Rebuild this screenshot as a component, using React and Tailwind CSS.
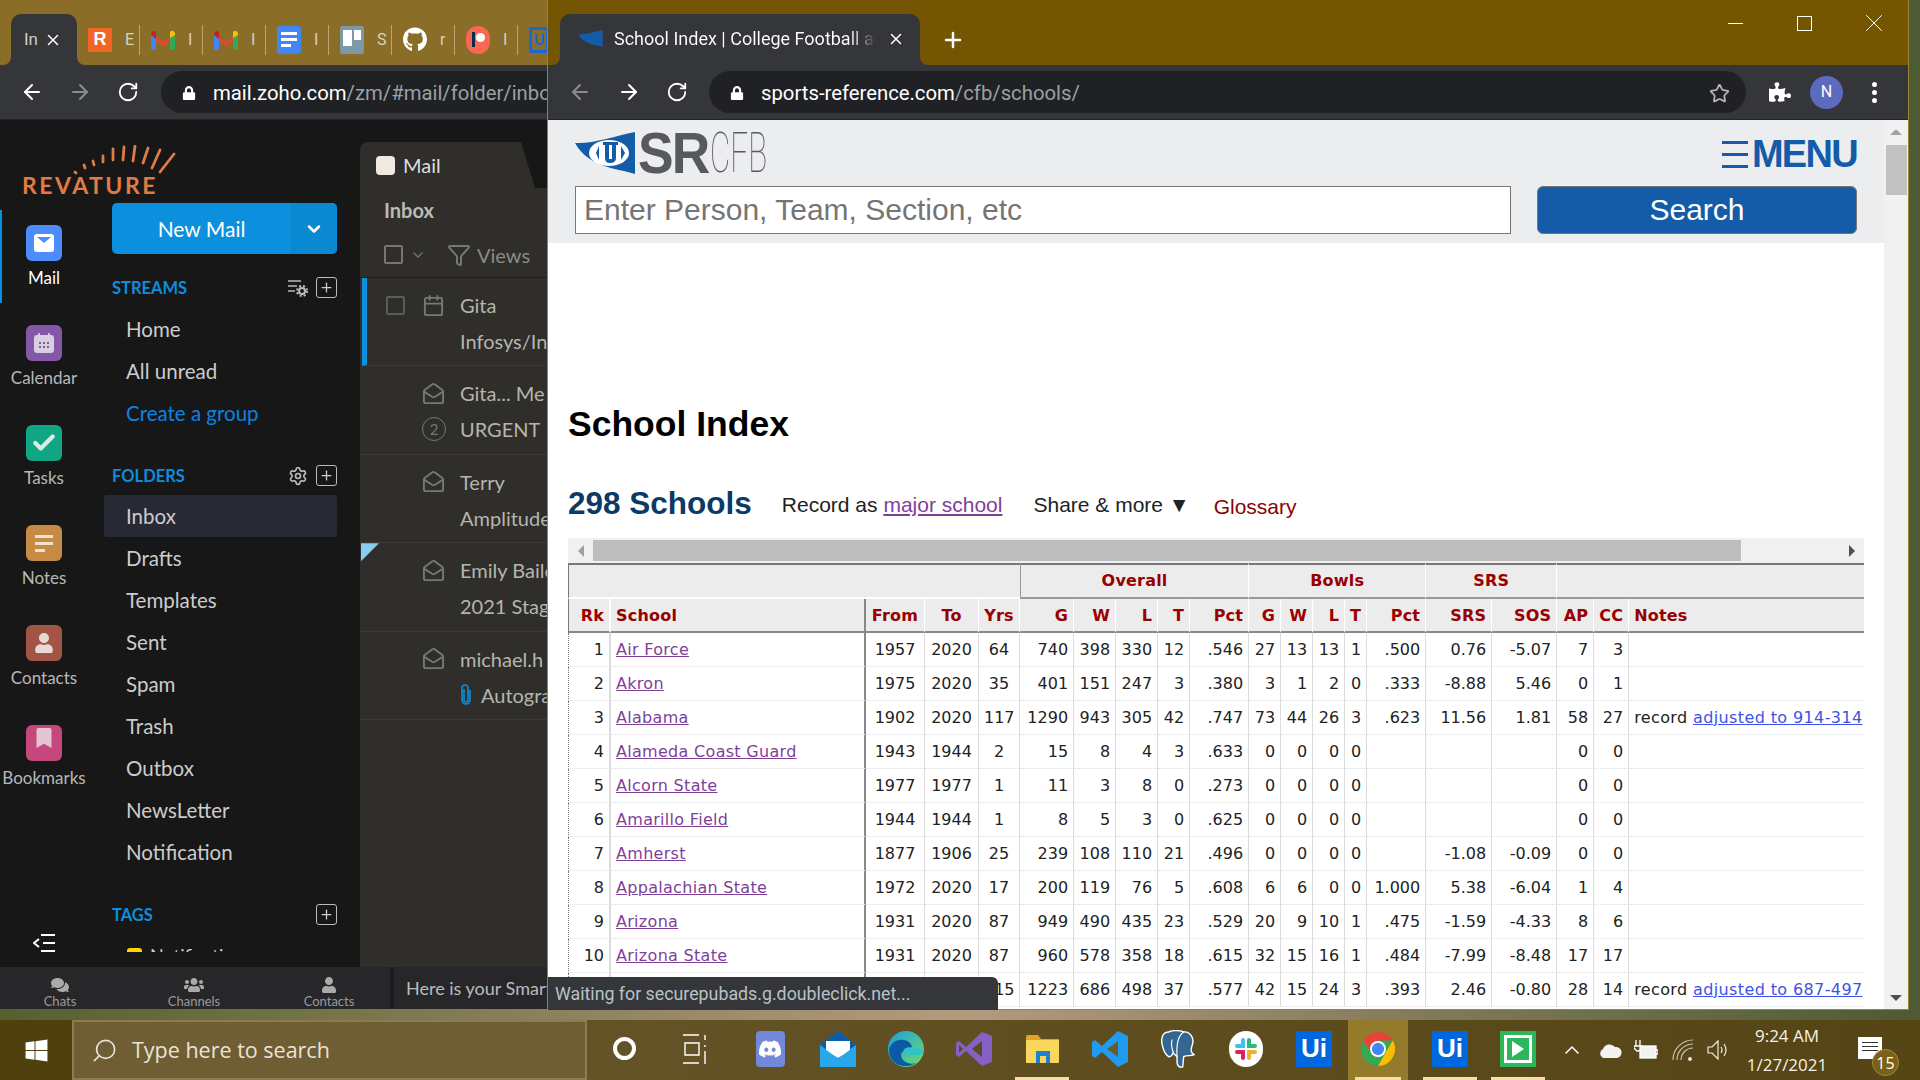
import React from "react";
import { ArrowLeft, ArrowRight, RotateCw, Star, X, Plus, Check, ChevronDown, ChevronUp, Funnel, Settings, MailOpen, Calendar, Search } from "lucide-react";
import { FaGithub, FaDiscord, FaWindows, FaLock, FaPuzzlePiece, FaComments, FaUsers, FaUser, FaBookmark } from "react-icons/fa";

const streams = ["Home", "All unread"];
const folders = ["Inbox", "Drafts", "Templates", "Sent", "Spam", "Trash", "Outbox", "NewsLetter", "Notification"];

const schools = [
  [1, "Air Force", 1957, 2020, 64, 740, 398, 330, 12, ".546", 27, 13, 13, 1, ".500", "0.76", "-5.07", 7, 3],
  [2, "Akron", 1975, 2020, 35, 401, 151, 247, 3, ".380", 3, 1, 2, 0, ".333", "-8.88", "5.46", 0, 1],
  [3, "Alabama", 1902, 2020, 117, 1290, 943, 305, 42, ".747", 73, 44, 26, 3, ".623", "11.56", "1.81", 58, 27, "adjusted to 914-314"],
  [4, "Alameda Coast Guard", 1943, 1944, 2, 15, 8, 4, 3, ".633", 0, 0, 0, 0, "", "", "", 0, 0],
  [5, "Alcorn State", 1977, 1977, 1, 11, 3, 8, 0, ".273", 0, 0, 0, 0, "", "", "", 0, 0],
  [6, "Amarillo Field", 1944, 1944, 1, 8, 5, 3, 0, ".625", 0, 0, 0, 0, "", "", "", 0, 0],
  [7, "Amherst", 1877, 1906, 25, 239, 108, 110, 21, ".496", 0, 0, 0, 0, "", "-1.08", "-0.09", 0, 0],
  [8, "Appalachian State", 1972, 2020, 17, 200, 119, 76, 5, ".608", 6, 6, 0, 0, "1.000", "5.38", "-6.04", 1, 4],
  [9, "Arizona", 1931, 2020, 87, 949, 490, 435, 23, ".529", 20, 9, 10, 1, ".475", "-1.59", "-4.33", 8, 6],
  [10, "Arizona State", 1931, 2020, 87, 960, 578, 358, 18, ".615", 32, 15, 16, 1, ".484", "-7.99", "-8.48", 17, 17],
  // first cells of this row sit under the status bubble
  ["", "", "", "", 115, 1223, 686, 498, 37, ".577", 42, 15, 24, 3, ".393", "2.46", "-0.80", 28, 14, "adjusted to 687-497"],
];

const columns = [
  { label: "G", w: "w-[54px]" },
  { label: "W", w: "w-[42px]" },
  { label: "L", w: "w-[42px]" },
  { label: "T", w: "w-[32px]" },
  { label: "Pct", w: "w-[59px]" },
  { label: "G", w: "w-[32px]" },
  { label: "W", w: "w-[32px]" },
  { label: "L", w: "w-[32px]" },
  { label: "T", w: "w-[22px]" },
  { label: "Pct", w: "w-[59px]" },
  { label: "SRS", w: "w-[66px]" },
  { label: "SOS", w: "w-[65px]" },
  { label: "AP", w: "w-[37px]" },
  { label: "CC", w: "w-[35px]" },
];

const GmailIcon = () => (
  <svg width="24" height="20" viewBox="0 0 24 20">
    <path d="M0 4 L12 12 L24 4 L24 8 L12 16 L0 8Z" fill="#ea4335" />
    <rect x="0" y="3" width="5" height="17" rx="1" fill="#4285f4" />
    <rect x="19" y="3" width="5" height="17" rx="1" fill="#34a853" />
    <path d="M19 8 L19 2 Q22 -1 24 3 L24 5Z" fill="#fbbc04" />
    <path d="M0 5 Q1 -1 5 2 L5 9Z" fill="#c5221f" />
  </svg>
);

const Pennant = ({ withU }) => (
  <svg width={withU ? 60 : 25} height={withU ? 42 : 17} viewBox="0 0 60 42">
    <path d="M0 11 C18 12 40 4 60 0 L60 42 C42 36 14 36 0 11Z" fill="#155ca8" />
    {withU && (
      <g>
        <ellipse cx="34" cy="21" rx="20" ry="13" fill="#ffffff" />
        <path d="M28 10 H43 V13 H41 V26 Q41 31 35 31 Q30 31 30 26 V13 H28Z" fill="#155ca8" />
        <rect x="34" y="13" width="3" height="14" fill="#ffffff" />
        <path d="M24 14 L21 21 L24 28Z" fill="#155ca8" />
        <path d="M46 14 L50 21 L46 28Z" fill="#155ca8" />
      </g>
    )}
  </svg>
);

// chrome tab strip piece, favicon + clipped letter
const StripTab = ({ icon, letter }) => (
  <div className="flex items-center shrink-0 w-[63px] h-[30px] border-r border-[#b9a56f] pl-[11px] overflow-hidden">
    <div className="w-[24px] h-[24px] flex items-center justify-center shrink-0">{icon}</div>
    <span className="ml-[13px] text-[16px] text-[#d8d2c0] font-['Roboto',sans-serif]">{letter}</span>
  </div>
);

const RailItem = ({ label, color, active, children }) => (
  <div className={`flex flex-col items-center h-[93px] mb-[7px] pt-[15px] w-[88px] ${active ? "border-l-2 border-[#0c8fdc] pr-[2px]" : ""}`}>
    <div className={`${color} w-[36px] h-[36px] rounded-[6px] flex items-center justify-center`}>{children}</div>
    <div className={`mt-[7px] text-[17px] leading-[20px] whitespace-nowrap ${active ? "text-white" : "text-[#b8b8b8]"}`}>{label}</div>
  </div>
);

const PlusBox = () => (
  <div className="w-[21px] h-[21px] border border-[#bbbbbb] rounded-[3px] flex items-center justify-center">
    <Plus size={15} strokeWidth={2} className="text-[#cfcfcf]" />
  </div>
);

const NavHeader = ({ label, children }) => (
  <div className="flex items-center justify-between h-[21px] pl-2">
    <span className="text-[#0d8ddb] text-[16.5px] font-bold pt-[2px]">{label}</span>
    <div className="flex items-center gap-[8px]">{children}</div>
  </div>
);

const NavRow = ({ label, active, blue }) => (
  <div className={`h-[42px] flex items-center pl-[22px] text-[20.5px] rounded-[3px] ${active ? "bg-[#272a35]" : ""} ${blue ? "text-[#0a84e0]" : "text-[#cccccc]"}`}>
    {label}
  </div>
);

const MailLine = ({ icon, check, children }) => (
  <div className="flex items-center h-[36px] whitespace-nowrap">
    <div className="w-[62px] pl-[26px] shrink-0">
      {check && <div className="w-[19px] h-[19px] border-2 border-[#5c5c58] rounded-[2px]" />}
    </div>
    <div className="w-[38px] shrink-0 text-[#777773]">{icon}</div>
    {children}
  </div>
);

const MailRow = ({ selected, flag, children }) => (
  <div className={`relative h-[88.4px] pt-[9px] border-b border-[#3b3a36] ${selected ? "border-l-[5px] border-l-[#0c8fdc] ml-[2px] -mr-[7px]" : ""}`}>
    {flag && <div className="absolute left-[1px] top-0 w-[18px] h-[18px] bg-[#8ccbf0] [clip-path:polygon(0_0,100%_0,0_100%)]" />}
    {children}
  </div>
);

const Cell = ({ value, align = "text-right", className = "" }) => (
  <td className={`h-[34px] px-[5px] border-b border-r border-b-[#ddd] border-r-[#ddd] border-dotted whitespace-nowrap overflow-hidden ${align} ${className}`} style={{ borderRightStyle: "solid" }}>
    {value}
  </td>
);

const TaskIcon = ({ w = "w-[68px]", active, highlight, className = "", children }) => (
  <div className={`${w} h-full shrink-0 flex flex-col ${highlight ? "bg-[#947a2b]" : ""} ${className}`}>
    <div className="flex-1 flex items-center justify-center">{children}</div>
    <div className={`h-[3px] mx-[7px] ${active ? "bg-[#f6dfa5]" : ""}`} />
  </div>
);

const UiPathIcon = () => (
  <div className="w-[36px] h-[36px] bg-[#0067df] flex items-center justify-center text-white text-[26px] font-bold font-['Liberation_Sans',sans-serif]">Ui</div>
);

const ZohoWindow = () => (
  <div className="absolute left-0 top-0 w-[548px] h-[1009px] flex flex-col overflow-hidden font-['Lato',sans-serif]">
    {/* tabs */}
    <div className="h-[65px] flex shrink-0 bg-[#35363a]">
      <div className="w-[11px] bg-[#8a6d27] rounded-br-[8px]" />
      <div className="w-[66px] bg-[#8a6d27]">
        <div className="mt-[14px] h-[51px] bg-[#35363a] rounded-t-[10px] flex items-center pl-[13px] text-[#ccc] text-[17px] font-['Roboto',sans-serif]">
          <span className="w-[14px] overflow-hidden">In</span>
          <X size={18} className="ml-[6px] text-white" />
        </div>
      </div>
      <div className="flex-1 bg-[#8a6d27] rounded-bl-[8px] pt-[14px] flex items-center overflow-hidden">
        <StripTab letter="E" icon={<div className="w-[24px] h-[24px] bg-[#f26522] text-white font-bold text-[18px] flex items-center justify-center font-['Liberation_Sans',sans-serif]">R</div>} />
        <StripTab letter="I" icon={<GmailIcon />} />
        <StripTab letter="I" icon={<GmailIcon />} />
        <StripTab letter="I" icon={<div className="w-[24px] h-[28px] bg-[#4285f4] rounded-[3px] flex flex-col gap-[3px] justify-center px-[4px]"><div className="h-[3px] bg-white" /><div className="h-[3px] bg-white" /><div className="h-[3px] w-[10px] bg-white" /></div>} />
        <StripTab letter="S" icon={<div className="w-[24px] h-[28px] bg-[#7d98a8] rounded-[2px] flex gap-[2px] justify-center pt-[4px]"><div className="w-[9px] h-[16px] bg-white" /><div className="w-[7px] h-[10px] bg-white" /></div>} />
        <StripTab letter="r" icon={<FaGithub size={25} className="text-white" />} />
        <StripTab letter="I" icon={<div className="w-[24px] h-[28px] rounded-full bg-[#f96854] flex items-center justify-center gap-[1px]"><div className="w-[3px] h-[15px] bg-[#052d49]" /><div className="w-[9px] h-[9px] rounded-full bg-white mb-[5px]" /></div>} />
        <div className="shrink-0 ml-[11px] w-[20px] h-[26px] border-[3px] border-[#1468e0] text-[#1468e0] font-bold text-[15px] leading-[19px] text-center">U</div>
      </div>
    </div>
    {/* toolbar */}
    <div className="h-[55px] shrink-0 bg-[#35363a] flex items-center border-b border-[#232427]">
      <ArrowLeft size={24} className="ml-[20px] text-white" />
      <ArrowRight size={24} className="ml-[24px] text-[#8a8b8e]" />
      <RotateCw size={22} className="ml-[25px] text-white" />
      <div className="ml-[22px] flex-1 h-[42px] pt-[2px] bg-[#202124] rounded-l-full flex items-center pl-[21px] overflow-hidden whitespace-nowrap font-['Roboto',sans-serif] text-[20.3px]">
        <FaLock size={14} className="text-white shrink-0" />
        <span className="ml-[17px] text-white">mail.zoho.com</span>
        <span className="text-[#9aa0a6]">/zm/#mail/folder/inbox</span>
      </div>
    </div>
    {/* app */}
    <div className="flex h-[847px] shrink-0">
      <div className="w-[360px] bg-[#171717] flex flex-col">
        <div className="h-[83px] shrink-0 pt-[25px] pl-[22px]">
          <svg width="160" height="32" viewBox="22 0 160 32" className="block" stroke="#e07b45" strokeWidth="2.8" strokeLinecap="round">
            <path d="M75 27 L76 28 M84 20 L85 23 M93 16 L94 20 M103 11 L103 17 M113 4 L113 15 M124 2 L123 15 M135 1 L133 16 M148 3 L143 18 M160 5 L152 23 M174 9 L160 27" fill="none" />
          </svg>
          <div className="text-[#e07b45] text-[23px] leading-[16px] font-bold tracking-[2.5px]">REVATURE</div>
        </div>
        <div className="flex flex-1">
          <div className="w-[104px] flex flex-col pt-[7px]">
            <RailItem label="Mail" color="bg-[#4a8dfb]" active>
              <svg width="20" height="18" viewBox="0 0 20 18">
                <rect width="20" height="18" rx="3" fill="#ffffff" />
                <path d="M3 3 H17 L10 9Z" fill="#4a8dfb" />
              </svg>
            </RailItem>
            <RailItem label="Calendar" color="bg-[#8457a8]">
              <svg width="20" height="20" viewBox="0 0 20 20" fill="#d8d0e0">
                <rect y="2" width="20" height="18" rx="3" />
                <rect x="4" width="2" height="4" rx="1" />
                <rect x="14" width="2" height="4" rx="1" />
                <path d="M5 9 h2 v2 h-2z M9 9 h2 v2 h-2z M13 9 h2 v2 h-2z M5 13 h2 v2 h-2z M9 13 h2 v2 h-2z M13 13 h2 v2 h-2z" fill="#8457a8" />
              </svg>
            </RailItem>
            <RailItem label="Tasks" color="bg-[#11a683]">
              <Check size={26} strokeWidth={4} className="text-[#d7ece6]" />
            </RailItem>
            <RailItem label="Notes" color="bg-[#c78a44]">
              <div className="flex flex-col gap-[4px] w-[18px]">
                <div className="h-[3px] bg-[#efe2d0]" />
                <div className="h-[3px] bg-[#efe2d0]" />
                <div className="h-[3px] w-[10px] bg-[#efe2d0]" />
              </div>
            </RailItem>
            <RailItem label="Contacts" color="bg-[#a25544]">
              <FaUser size={20} className="text-[#e6dad6]" />
            </RailItem>
            <RailItem label="Bookmarks" color="bg-[#c6477c]">
              <FaBookmark size={20} className="text-[#e3c5d2] -mt-[10px]" />
            </RailItem>
            <div className="flex-1 flex items-end pb-[14px] pl-[33px]">
              <svg width="22" height="20" viewBox="0 0 22 20" fill="none" stroke="#ffffff" strokeWidth="2">
                <path d="M6 6 L1 10 L6 14 M8 2 H22 M10 10 H22 M8 18 H22" />
              </svg>
            </div>
          </div>
          <div className="w-[233px]">
            <div className="ml-2 w-[225px] h-[51px] bg-[#0c8fdc] rounded-[5px] flex text-white text-[21px] overflow-hidden">
              <div className="flex-1 flex items-center justify-center">New Mail</div>
              <div className="w-[46px] bg-[#0b88d2] flex items-center justify-center">
                <ChevronDown size={20} strokeWidth={3} />
              </div>
            </div>
            <div className="mt-[23px]">
              <NavHeader label="STREAMS">
                <svg width="20" height="18" viewBox="0 0 20 18" fill="none" stroke="#bbbbbb" strokeWidth="1.5">
                  <path d="M0 2 H13 M0 7 H9 M0 12 H7" />
                  <circle cx="14" cy="12" r="3" strokeWidth="2" />
                  <circle cx="14" cy="12" r="5" strokeWidth="2" strokeDasharray="2 2" />
                </svg>
                <PlusBox />
              </NavHeader>
            </div>
            <div className="mt-[10px]">
              {streams.map((s) => <NavRow key={s} label={s} />)}
              <NavRow label="Create a group" blue />
            </div>
            <div className="mt-[31px]">
              <NavHeader label="FOLDERS">
                <Settings size={20} className="text-[#bbbbbb]" />
                <PlusBox />
              </NavHeader>
            </div>
            <div className="mt-[9px]">
              {folders.map((f) => <NavRow key={f} label={f} active={f === "Inbox"} />)}
            </div>
            <div className="mt-[31px]">
              <NavHeader label="TAGS">
                <PlusBox />
              </NavHeader>
            </div>
            <div className="mt-[23px] h-[4px] overflow-hidden flex pl-[23px] gap-[8px]">
              <div className="w-[15px] h-[12px] rounded-[3px] bg-[#ffd400]" />
              <div className="text-[#ccc] text-[18px] leading-[14px]">Notification</div>
            </div>
          </div>
        </div>
      </div>
      {/* message list */}
      <div className="w-[188px] bg-[#171717] pt-[22px] flex flex-col text-[20px] text-[#b5b5ae]">
        <div className="h-[46px] w-[175px] shrink-0 bg-[#2f2e2a] rounded-tl-[8px] [clip-path:polygon(0_0,92%_0,100%_100%,0_100%)] flex items-center pl-[16px] gap-[8px] text-[#dddddd]">
          <div className="w-[19px] h-[19px] rounded-[4px] bg-[#efe9df]" />
          Mail
        </div>
        <div className="flex-1 bg-[#2f2e2a] overflow-hidden">
          <div className="h-[46px] pb-[2px] flex items-center pl-[24px] font-bold text-[#bbbbb5]">Inbox</div>
          <div className="h-[44px] pb-[2px] flex items-center pl-[24px] border-b border-[#1f1f1c] text-[#8b8b86]">
            <div className="w-[19px] h-[19px] border-2 border-[#77776f] rounded-[2px]" />
            <ChevronDown size={16} className="ml-[7px] text-[#77776f]" />
            <Funnel size={24} className="ml-[21px] text-[#77776f] shrink-0" />
            <span className="ml-[6px]">Views</span>
          </div>
          <MailRow selected>
            <div className="-ml-[7px]">
              <MailLine check icon={<Calendar size={23} />}>Gita</MailLine>
              <MailLine>Infosys/Infosys</MailLine>
            </div>
          </MailRow>
          <MailRow>
            <MailLine icon={<MailOpen size={23} />}>Gita... Me</MailLine>
            <MailLine icon={<div className="w-[24px] h-[24px] rounded-full border border-[#777773] text-[15px] leading-[22px] text-center">2</div>}>URGENT</MailLine>
          </MailRow>
          <MailRow>
            <MailLine icon={<MailOpen size={23} />}>Terry</MailLine>
            <MailLine>Amplitude</MailLine>
          </MailRow>
          <MailRow flag>
            <MailLine icon={<MailOpen size={23} />}>Emily Bailey</MailLine>
            <MailLine>2021 Stage</MailLine>
          </MailRow>
          <MailRow>
            <MailLine icon={<MailOpen size={23} />}>michael.h</MailLine>
            <MailLine>
              <svg width="12" height="22" viewBox="0 0 12 22" fill="none" stroke="#0c8fdc" strokeWidth="1.6" className="shrink-0 mr-[9px]">
                <path d="M4 5 V16 A2 2 0 0 0 8 16 V4 A3 3 0 0 0 2 4 V16 A4 4 0 0 0 10 16 V6" />
              </svg>
              Autograph
            </MailLine>
          </MailRow>
        </div>
      </div>
    </div>
    {/* chat bar */}
    <div className="h-[42px] shrink-0 bg-[#27272a] flex text-[#9a9a9a]">
      <div className="w-[120px] shrink-0 flex flex-col items-center pt-[10px] text-[13px] leading-[16px]"><FaComments size={20} className="text-[#aaa]" />Chats</div>
      <div className="w-[148px] shrink-0 flex flex-col items-center pt-[10px] text-[13px] leading-[16px]"><FaUsers size={20} className="text-[#aaa]" />Channels</div>
      <div className="w-[122px] shrink-0 flex flex-col items-center pt-[10px] text-[13px] leading-[16px]"><FaUser size={18} className="text-[#aaa]" />Contacts</div>
      <div className="w-[4px] shrink-0 bg-[#1d1d1f]" />
      <div className="pl-[12px] flex items-center text-[18px] text-[#bbbbbb] whitespace-nowrap">Here is your Smart Chat</div>
    </div>
  </div>
);

const BrowserWindow = () => (
  <div className="absolute left-[547px] top-0 w-[1362px] h-[1010px] border-l border-r border-b border-[#9a8430] flex flex-col overflow-hidden">
    <div className="h-[65px] flex shrink-0 bg-[#35363a]">
      <div className="w-[12px] bg-[#745501] rounded-br-[8px]" />
      <div className="w-[360px] bg-[#745501]">
        <div className="mt-[14px] h-[51px] pb-[2px] bg-[#35363a] rounded-t-[10px] flex items-center pl-[18px] font-['Roboto',sans-serif] text-[18px] text-white whitespace-nowrap">
          <Pennant />
          <span className="ml-[11px] w-[262px] overflow-hidden bg-linear-to-r from-white from-90% to-transparent bg-clip-text text-transparent">School Index | College Football at Sports</span>
          <X size={18} className="ml-[11px] text-white" />
        </div>
      </div>
      <div className="flex-1 bg-[#745501] rounded-bl-[8px] flex items-center pt-[14px] pl-[21px] text-white">
        <Plus size={24} strokeWidth={2.5} />
        <div className="ml-auto self-start -mt-[14px] flex h-[46px] items-center">
          <div className="w-[69px] flex justify-center"><div className="w-[15px] h-[1px] bg-white" /></div>
          <div className="w-[69px] flex justify-center"><div className="w-[15px] h-[15px] border border-white" /></div>
          <div className="w-[69px] flex justify-center"><X size={30} strokeWidth={0.8} /></div>
        </div>
      </div>
    </div>
    <div className="h-[55px] shrink-0 bg-[#35363a] flex items-center border-b border-[#232427]">
      <ArrowLeft size={24} className="ml-[20px] text-[#8a8b8e]" />
      <ArrowRight size={24} className="ml-[25px] text-white" />
      <RotateCw size={22} className="ml-[25px] text-white" />
      <div className="ml-[21px] w-[1037px] h-[42px] pt-[2px] bg-[#202124] rounded-full flex items-center pl-[21px] whitespace-nowrap font-['Roboto',sans-serif] text-[20.3px]">
        <FaLock size={14} className="text-white shrink-0" />
        <span className="ml-[17px] text-white">sports-reference.com</span>
        <span className="text-[#9aa0a6]">/cfb/schools/</span>
        <Star size={21} className="ml-auto mr-[16px] text-[#b5b5b5]" />
      </div>
      <FaPuzzlePiece size={22} className="ml-[23px] text-white" />
      <div className="ml-[19px] w-[33px] h-[33px] rounded-full bg-[#5c6bc0] text-white text-[16px] flex items-center justify-center font-['Roboto',sans-serif]">N</div>
      <div className="ml-[29px] flex flex-col gap-[3px]">
        <div className="w-[5px] h-[5px] rounded-full bg-white" />
        <div className="w-[5px] h-[5px] rounded-full bg-white" />
        <div className="w-[5px] h-[5px] rounded-full bg-white" />
      </div>
    </div>
    <div className="flex flex-1 min-h-0 font-['Liberation_Sans',sans-serif]">
      <div className="w-[1336px] shrink-0 bg-white overflow-hidden">
        <div className="h-[123px] bg-[#ecedef] px-[27px] pt-[12px]">
          <div className="h-[42px] flex items-center justify-between">
            <div className="flex items-center">
              <Pennant withU />
              <span className="ml-[3px] w-[72px] text-[#58595b] text-[58px] leading-[42px] font-bold tracking-[-2px] origin-left scale-x-[0.92]">SR</span>
              <span className="text-[#58595b] text-[56px] leading-[42px] font-['Roboto',sans-serif] font-thin origin-left scale-x-[0.56]">CFB</span>
            </div>
            <div className="flex items-center text-[#155ca8] pt-[2px]">
              <div className="flex flex-col gap-[9px] w-[26px] mr-[4px]">
                <div className="h-[3px] bg-[#155ca8]" />
                <div className="h-[3px] bg-[#155ca8]" />
                <div className="h-[3px] bg-[#155ca8]" />
              </div>
              <span className="text-[38px] leading-[42px] font-bold tracking-[-1.7px]">MENU</span>
            </div>
          </div>
          <div className="mt-[12px] flex justify-between">
            <div className="w-[936px] h-[48px] pb-[2px] bg-white border border-[#777777] flex items-center pl-[8px] text-[30px] text-[#757575]">Enter Person, Team, Section, etc</div>
            <div className="w-[320px] h-[48px] pb-[2px] bg-[#155ca8] border border-[#777777] rounded-[6px] flex items-center justify-center text-white text-[30px]">Search</div>
          </div>
        </div>
        <div className="px-[20px]">
          <h1 className="mt-[159px] text-[35.5px] leading-[44px] font-bold text-black">School Index</h1>
          <div className="mt-[37px] h-[40px] flex items-center text-[21px] text-[#222] whitespace-nowrap">
            <h2 className="text-[31.5px] leading-[40px] font-bold text-[#0c3a66]">298 Schools</h2>
            <span className="ml-[30px] pt-[4px]">Record as <span className="text-[#7f3f98] underline">major school</span></span>
            <span className="ml-[31px] pt-[4px]">Share &amp; more ▼</span>
            <span className="ml-[24px] pt-[8px] text-[#8b0000]">Glossary</span>
          </div>
          <div className="mt-[15px] h-[25px] bg-[#f0f0f0] flex items-center relative">
            <div className="w-[25px] flex justify-center">
              <div className="w-0 h-0 border-y-[6px] border-y-transparent border-r-[6px] border-r-[#a0a0a0]" />
            </div>
            <div className="w-[1148px] h-[21px] bg-[#bebebe]" />
            <div className="ml-auto w-[25px] flex justify-center">
              <div className="w-0 h-0 border-y-[6px] border-y-transparent border-l-[6px] border-l-[#505050]" />
            </div>
          </div>
          <table className="w-[1296px] table-fixed border-separate border-spacing-0 text-[16px] text-[#222] font-['DejaVu_Sans',sans-serif]">
            <colgroup>
              <col className="w-[43px]" />
              <col className="w-[255px]" />
              <col className="w-[59px]" />
              <col className="w-[54px]" />
              <col className="w-[41px]" />
              {columns.map((c, i) => <col key={i} className={c.w} />)}
              <col className="w-[235px]" />
            </colgroup>
            <thead className="text-[#990000] tracking-[0.2px]">
              <tr>
                <th colSpan={5} className="h-[36px] bg-[#ececec] border-t-2 border-t-[#777] border-l border-l-[#777] border-b-2 border-b-white" />
                <th colSpan={5} className="bg-[#ececec] border-t-2 border-t-[#777] border-l border-l-[#999] border-b-2 border-b-[#999] border-r border-r-white">Overall</th>
                <th colSpan={5} className="bg-[#ececec] border-t-2 border-t-[#777] border-b-2 border-b-[#999] border-r border-r-white">Bowls</th>
                <th colSpan={2} className="bg-[#ececec] border-t-2 border-t-[#777] border-b-2 border-b-[#999] border-r border-r-white">SRS</th>
                <th colSpan={3} className="bg-[#ececec] border-t-2 border-t-[#777] border-b-2 border-b-[#999]" />
              </tr>
              <tr>
                <th className="h-[34px] pt-[2px] bg-[#ececec] border-b-2 border-b-[#888] border-l border-l-[#777] border-r-2 border-r-white text-right pr-[5px]">Rk</th>
                <th className="pt-[2px] bg-[#ececec] border-b-2 border-b-[#888] border-r-2 border-r-[#888] text-left pl-[5px]">School</th>
                <th className="pt-[2px] bg-[#ececec] border-b-2 border-b-[#888] border-r border-r-white text-center">From</th>
                <th className="pt-[2px] bg-[#ececec] border-b-2 border-b-[#888] border-r border-r-white text-center">To</th>
                <th className="pt-[2px] bg-[#ececec] border-b-2 border-b-[#888] border-r border-r-white text-center">Yrs</th>
                {columns.map((c, i) => (
                  <th key={i} className="pt-[2px] bg-[#ececec] border-b-2 border-b-[#888] border-r border-r-white text-right pr-[5px]">{c.label}</th>
                ))}
                <th className="pt-[2px] bg-[#ececec] border-b-2 border-b-[#888] text-left pl-[5px]">Notes</th>
              </tr>
            </thead>
            <tbody>
              {schools.map((row, idx) => {
                const [rk, name, from, to, yrs, ...stats] = row;
                const note = stats[14];
                return (
                  <tr key={idx}>
                    <Cell value={rk} className="border-l border-l-[#777] border-r-2" />
                    <td className="px-[5px] border-b border-dotted border-b-[#ddd] border-r-2 border-r-[#888] whitespace-nowrap" style={{ borderRightStyle: "solid" }}>
                      <span className="text-[#7f3f98] underline tracking-[0.3px]">{name}</span>
                    </td>
                    <Cell value={from} align="text-center" />
                    <Cell value={to} align="text-center" />
                    <Cell value={yrs} align="text-center" />
                    {stats.slice(0, 14).map((v, i) => <Cell key={i} value={v} />)}
                    <td className="pl-[5px] border-b border-dotted border-b-[#ddd] whitespace-nowrap">
                      {note && <span className="tracking-[0.38px]">record <span className="text-[#3f51e8] underline">{note}</span></span>}
                    </td>
                  </tr>
                );
              })}
            </tbody>
          </table>
        </div>
      </div>
      {/* page scrollbar */}
      <div className="flex-1 bg-[#f1f1f1] flex flex-col items-center">
        <div className="mt-[9px] w-0 h-0 border-x-[6px] border-x-transparent border-b-[6px] border-b-[#a3a3a3]" />
        <div className="mt-[10px] w-[21px] h-[50px] bg-[#c1c1c1]" />
        <div className="mt-auto mb-[8px] w-0 h-0 border-x-[6px] border-x-transparent border-t-[6px] border-t-[#505050]" />
      </div>
    </div>
  </div>
);

const Taskbar = () => (
  <div className="absolute left-0 bottom-0 w-[1920px] h-[60px] flex bg-linear-to-r from-[#6b5a2e] to-[#554414] text-white">
    <div className="w-[72px] h-full bg-[#4f400d] flex items-center justify-center">
      <FaWindows size={25} />
    </div>
    <div className="w-[515px] h-full pt-[1px] bg-[#6f5e33] border-2 border-[#8d7c50] flex items-center pl-[17px] font-['Open_Sans',sans-serif] text-[21.5px] text-[#e8e4d8]">
      <Search size={27} strokeWidth={1.5} className="-scale-x-100" />
      <span className="ml-[14px]">Type here to search</span>
    </div>
    <TaskIcon w="w-[74px]"><div className="w-[23px] h-[23px] rounded-full border-[4px] border-white" /></TaskIcon>
    <TaskIcon>
      <svg width="24" height="30" viewBox="0 0 24 30" fill="none" stroke="#fff" strokeWidth="1.4">
        <path d="M0 1 H16 M2 9 H16 V21 H2Z M0 29 H16 M22 1 V6 M22 11 V13 M22 17 V30" />
      </svg>
    </TaskIcon>
    <TaskIcon className="ml-[7px]">
      <div className="w-[29px] h-[36px] bg-[#7289da] rounded-[4px] flex items-center justify-center"><FaDiscord size={24} /></div>
    </TaskIcon>
    <TaskIcon>
      <svg width="36" height="36" viewBox="0 0 36 36">
        <path d="M0 14 L18 0 L36 14 L36 36 L0 36Z" fill="#0f7fd6" />
        <path d="M0 14 L18 0 L36 14 L18 26Z" fill="#0a5ea8" />
        <path d="M6 10 H30 V20 L18 27 L6 20Z" fill="#ffffff" />
        <path d="M0 14 L18 28 L36 14 V36 H0Z" fill="#28a8ea" />
      </svg>
    </TaskIcon>
    <TaskIcon>
      <svg width="36" height="36" viewBox="0 0 36 36">
        <defs>
          <linearGradient id="edgeTop" x1="0" y1="0" x2="1" y2="1">
            <stop offset="0" stopColor="#1b9de2" />
            <stop offset="1" stopColor="#6fdc6a" />
          </linearGradient>
        </defs>
        <circle cx="18" cy="18" r="18" fill="url(#edgeTop)" />
        <path d="M1 20 C2 8 16 6 22 12 C26 17 24 22 14 21 C10 28 20 35 28 32 C20 38 2 36 1 20Z" fill="#0c59a4" />
        <path d="M15 21 C16 14 28 16 36 20 C35 24 31 24 27 24 C20 24 17 23 15 21Z" fill="#2fc3c7" />
      </svg>
    </TaskIcon>
    <TaskIcon>
      <svg width="36" height="36" viewBox="0 0 36 36">
        <path d="M26 1 L36 5 V31 L26 35 L10 20 L3 26 L0 24 V12 L3 10 L10 16Z" fill="#8661c5" />
        <path d="M26 10 L16 18 L26 26Z" fill="#5c4a1f" />
        <path d="M3 14 L7 18 L3 22Z" fill="#5c4a1f" />
      </svg>
    </TaskIcon>
    <TaskIcon active>
      <svg width="33" height="28" viewBox="0 0 33 28">
        <path d="M0 2 Q0 0 2 0 H12 L15 4 H33 V10 H0Z" fill="#e0a526" />
        <rect x="0" y="5" width="33" height="23" rx="1" fill="#f9d65c" />
        <rect x="10" y="16" width="14" height="12" fill="#1f7fd0" />
        <rect x="14" y="21" width="6" height="7" fill="#f9d65c" />
      </svg>
    </TaskIcon>
    <TaskIcon>
      <svg width="36" height="36" viewBox="0 0 36 36">
        <path d="M26 0 L36 5 V31 L26 36 L10 21 L3 27 L0 25 V11 L3 9 L10 15Z" fill="#1f9cf0" />
        <path d="M26 10 L15 18 L26 26Z" fill="#6b5a2e" />
      </svg>
    </TaskIcon>
    <TaskIcon>
      <svg width="34" height="38" viewBox="0 0 36 40">
        <path d="M8 2 C2 2 0 8 1 14 C2 20 5 26 8 28 C10 29 12 26 13 24 C14 26 16 27 17 28 L17 34 C17 38 20 40 23 39 L24 28 C28 26 32 28 35 26 C32 24 31 22 33 16 C36 8 30 1 24 2 C20 0 12 0 8 2Z" fill="#336791" stroke="#ffffff" strokeWidth="1.5" />
        <path d="M24 2 C18 6 16 14 17 28 M12 10 C10 14 11 18 13 24" fill="none" stroke="#ffffff" strokeWidth="1.2" />
      </svg>
    </TaskIcon>
    <TaskIcon>
      <div className="w-[34px] h-[36px] rounded-full bg-white flex items-center justify-center">
        <svg width="24" height="24" viewBox="0 0 24 24" strokeWidth="4" strokeLinecap="round" fill="none">
          <path d="M9 3 V9 H3" stroke="#36c5f0" />
          <path d="M21 9 H15 V3" stroke="#2eb67d" />
          <path d="M15 21 V15 H21" stroke="#ecb22e" />
          <path d="M3 15 H9 V21" stroke="#e01e5a" />
        </svg>
      </div>
    </TaskIcon>
    <TaskIcon><UiPathIcon /></TaskIcon>
    <TaskIcon w="w-[60px]" active highlight>
      <svg width="34" height="36" viewBox="0 0 36 36">
        <circle cx="18" cy="18" r="18" fill="#34a853" />
        <path d="M18 0 A18 18 0 0 1 33.6 9 L18 9 Z M18 0 A18 18 0 0 0 2.4 9 L11 22 L18 9Z" fill="#ea4335" />
        <path d="M33.6 9 A18 18 0 0 1 18 36 L27 20 Z" fill="#fbbc04" />
        <circle cx="18" cy="18" r="8.5" fill="#ffffff" />
        <circle cx="18" cy="18" r="6.5" fill="#4285f4" />
      </svg>
    </TaskIcon>
    <TaskIcon className="ml-[8px]" active><UiPathIcon /></TaskIcon>
    <TaskIcon active>
      <div className="w-[36px] h-[36px] bg-[#2bb75a] flex items-center justify-center">
        <div className="w-[28px] h-[28px] border-[3px] border-white flex items-center justify-center">
          <div className="w-0 h-0 border-y-[8px] border-y-transparent border-l-[12px] border-l-white" />
        </div>
      </div>
    </TaskIcon>
    <div className="w-[40px] h-full flex items-center justify-center"><ChevronUp size={24} strokeWidth={1.5} /></div>
    <div className="w-[36px] h-full flex items-center justify-center">
      <svg width="24" height="16" viewBox="0 0 24 16" fill="#f2f2f2"><path d="M5 16 A5 5 0 0 1 5 7 A7 7 0 0 1 17 5 A5.5 5.5 0 0 1 19 16Z" /></svg>
    </div>
    <div className="w-[36px] h-full flex items-center justify-center">
      <svg width="24" height="20" viewBox="0 0 24 20" fill="none" stroke="#fff" strokeWidth="1.3">
        <path d="M2 0 V6 M6 0 V6 M0 6 H8 V8 L5 11 H3 L0 8Z" />
        <rect x="6" y="6" width="16" height="12" fill="#f2f2f2" />
        <path d="M22 10 H24 V14 H22" />
      </svg>
    </div>
    <div className="w-[38px] h-full flex items-center justify-center">
      <svg width="22" height="22" viewBox="0 0 22 22" fill="none" stroke="#e6e2d4" strokeWidth="1.2">
        <path d="M1 21 A20 20 0 0 1 21 1 M5 21 A16 16 0 0 1 21 5 M9 21 A12 12 0 0 1 21 9" opacity="0.8" />
        <circle cx="18" cy="20" r="1.3" fill="#fff" />
      </svg>
    </div>
    <div className="w-[32px] h-full flex items-center justify-center">
      <svg width="22" height="20" viewBox="0 0 22 20" fill="none" stroke="#f0ede2" strokeWidth="1.2">
        <path d="M1 7 H5 L11 1 V19 L5 13 H1Z M14 7 Q16 10 14 13 M17 4 Q21 10 17 16" />
      </svg>
    </div>
    <div className="w-[106px] h-full flex flex-col items-center justify-center font-['Open_Sans',sans-serif] text-[17px] leading-[29px] text-[#f5f2e6]">
      <div>9:24 AM</div>
      <div>1/27/2021</div>
    </div>
    <div className="w-[60px] h-full flex items-center justify-center relative">
      <div className="w-[24px] h-[22px] bg-white flex flex-col gap-[3px] px-[4px] pt-[5px] -mt-[4px]">
        <div className="h-[1px] bg-[#333]" />
        <div className="h-[1px] bg-[#333]" />
        <div className="h-[1px] bg-[#333]" />
      </div>
      <div className="absolute left-[32px] top-[29px] w-[27px] h-[27px] rounded-full bg-[#7a6116] border border-[#a08a4a] text-[16px] text-white flex items-center justify-center font-['Open_Sans',sans-serif]">15</div>
    </div>
  </div>
);

const App = () => {
  return (
    <div className="relative w-[1920px] h-[1080px] overflow-hidden bg-linear-to-r from-[#55602f] via-[#b59a80] to-[#4d5a34]">
      <ZohoWindow />
      <BrowserWindow />
      <div className="absolute left-[548px] top-[977px] w-[450px] h-[33px] pt-[1px] bg-[#35363a] rounded-tr-[6px] flex items-center pl-[7px] text-[17.8px] text-[#b8c2c8] font-['Roboto',sans-serif] whitespace-nowrap">
        Waiting for securepubads.g.doubleclick.net...
      </div>
      <Taskbar />
    </div>
  );
};

export default App;
